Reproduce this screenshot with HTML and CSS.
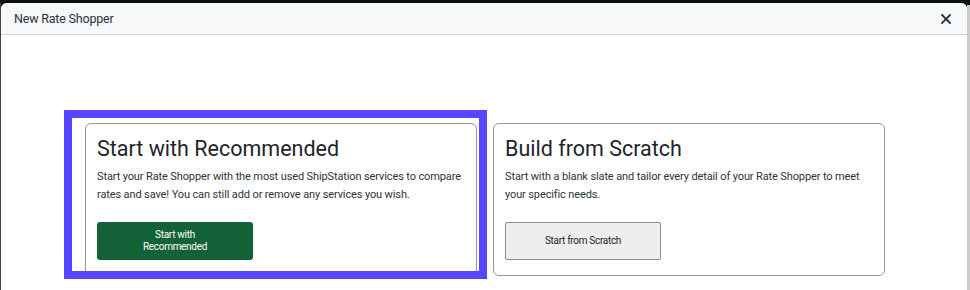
FILE: index.html
```html
<!DOCTYPE html>
<html>
<head>
<meta charset="utf-8">
<link rel="stylesheet" href="styles.css">
</head>
<body>
<div class="page">
  <div class="edge-left"></div>
  <div class="modal">
    <div class="modal-header">
      <span class="modal-title">New Rate Shopper</span>
      <svg class="close" width="10" height="10" viewBox="0 0 10 10"><path d="M1 1 L9 9 M9 1 L1 9" stroke="#2b3138" stroke-width="1.8" stroke-linecap="square"/></svg>
    </div>
    <div class="modal-body">
      <div class="cards">
        <div class="card">
          <h2 class="card-title">Start with Recommended</h2>
          <p class="card-text">Start your Rate Shopper with the most used ShipStation services to compare rates and save! You can still add or remove any services you wish.</p>
          <button class="btn btn-primary">Start with<br>Recommended</button>
          <div class="highlight"></div>
        </div>
        <div class="card">
          <h2 class="card-title">Build from Scratch</h2>
          <p class="card-text">Start with a blank slate and tailor every detail of your Rate Shopper to meet your specific needs.</p>
          <button class="btn btn-secondary">Start from Scratch</button>
        </div>
      </div>
    </div>
  </div>
  <div class="edge-right"></div>
</div>
</body>
</html>
```
FILE: styles.css
```css
html, body {
  margin: 0;
  padding: 0;
  height: 100%;
  background: #0c1212;
  font-family: Roboto, "Liberation Sans", sans-serif;
  overflow: hidden;
}
.page {
  display: flex;
  height: 290px;
  padding-top: 3px;
  box-sizing: border-box;
}
.edge-left {
  width: 1px;
  background: #4a3e4c;
}
.edge-right {
  width: 3px;
  margin-top: 2px;
  background: #c9cbcd;
}
.modal {
  width: 966px;
  background: #ffffff;
  border-radius: 6px 6px 0 0;
  overflow: hidden;
  display: flex;
  flex-direction: column;
}
.modal-header {
  height: 31px;
  background: #f6f8fa;
  border-bottom: 1px solid #cfd6dd;
  display: flex;
  align-items: center;
  justify-content: space-between;
  padding: 0 16px 0 13px;
}
.modal-title {
  font-size: 12.5px;
  letter-spacing: -0.2px;
  color: #2e3338;
}
.close {
  display: block;
}
.modal-body {
  flex: 1;
  padding-top: 88px;
}
.cards {
  display: flex;
  justify-content: center;
  gap: 16px;
  padding-left: 2px;
}
.card {
  position: relative;
  width: 392px;
  height: 153px;
  box-sizing: border-box;
  border: 1px solid #8d99a5;
  border-radius: 6px;
  padding: 11px 11px 0 11px;
}
.card-title {
  margin: 0;
  font-size: 21.5px;
  font-weight: 400;
  color: #1f2429;
  line-height: 28px;
}
.card-text {
  margin: 5px 0 0 0;
  font-size: 11px;
  letter-spacing: -0.12px;
  line-height: 18px;
  color: #2e3338;
}
.btn {
  display: block;
  margin-top: 18px;
  width: 156px;
  height: 38px;
  font-family: Roboto, "Liberation Sans", sans-serif;
  font-size: 10px;
  letter-spacing: -0.3px;
  line-height: 12px;
  border-radius: 3px;
  padding: 0;
}
.btn-primary {
  background: #136237;
  color: #ffffff;
  border: none;
}
.btn-secondary {
  background: #eeeeee;
  color: #1f2429;
  border: 1px solid #8d8d8d;
  border-radius: 2px;
}
.highlight {
  position: absolute;
  left: -22px;
  top: -14px;
  width: 423px;
  height: 169px;
  box-sizing: border-box;
  border: 8px solid #5547ff;
  pointer-events: none;
}
```
